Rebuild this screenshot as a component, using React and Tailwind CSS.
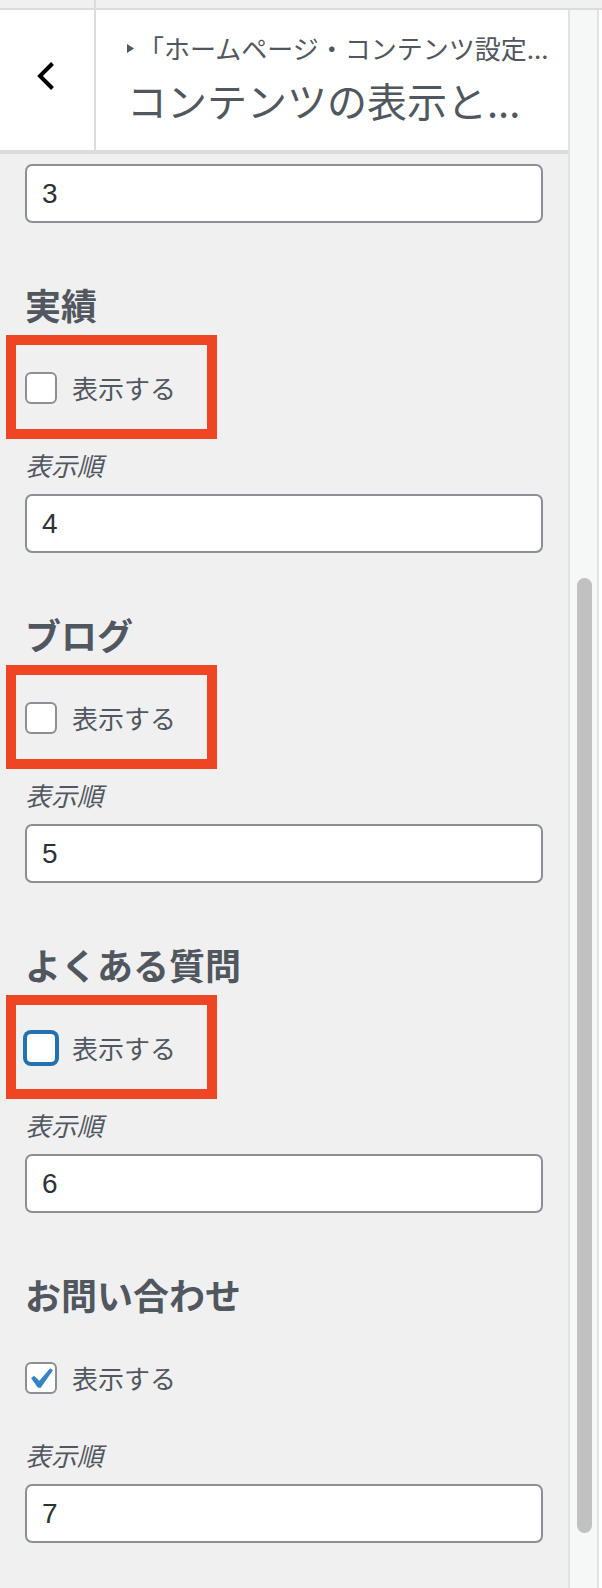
import React from "react";

const sections = [
  { title: "実績", value: "4", state: "boxed" },
  { title: "ブログ", value: "5", state: "boxed" },
  { title: "よくある質問", value: "6", state: "focused" },
  { title: "お問い合わせ", value: "7", state: "checked" },
];

function NumberInput({ value }) {
  return (
    <div className="h-[59px] w-[518px] rounded-[7px] border-2 border-[#8c8f94] bg-white px-[15px] flex items-center font-['Liberation_Sans',sans-serif] text-[28px] text-[#2c3338]">
      {value}
    </div>
  );
}

function Checkbox({ state }) {
  if (state === "focused") {
    return (
      <div className="h-[32px] w-[32px] shrink-0 rounded-[6px] border-2 border-[#2271b1] bg-white shadow-[0_0_0_2px_#2271b1]" />
    );
  }
  return (
    <div className="relative h-[32px] w-[32px] shrink-0 rounded-[6px] border-2 border-[#8c8f94] bg-white">
      {state === "checked" && (
        <svg
          className="absolute left-[-8px] top-[-6px]"
          width="42"
          height="42"
          viewBox="0 0 20 20"
        >
          <path
            d="M14.83 4.89l1.34.94-5.81 8.38H9.02L5.78 9.67l1.34-1.25 2.57 2.4z"
            fill="#3582c4"
          />
        </svg>
      )}
    </div>
  );
}

function Section({ title, value, state }) {
  return (
    <div className="flex flex-col">
      <div className="mt-[61px] h-[40px] leading-[40px] text-[36px] font-bold text-[#50575e]">
        {title}
      </div>
      <div className="relative mt-[48px] flex h-[32px] items-center gap-[15px]">
        <Checkbox state={state} />
        <span className="text-[26px] leading-[32px] text-[#50575e]">表示する</span>
        {state !== "checked" && (
          <div className="absolute left-[-19px] top-[-37px] h-[104px] w-[211px] border-[10px] border-[#ee4622]" />
        )}
      </div>
      <div className="mt-[46px] h-[30px] text-[26px] italic leading-[30px] text-[#50575e]">
        表示順
      </div>
      <div className="mt-[14px]">
        <NumberInput value={value} />
      </div>
    </div>
  );
}

export default function App() {
  return (
    <div className="h-[1588px] w-[602px] overflow-hidden bg-[#f0f0f1] font-['Noto_Sans_CJK_JP',sans-serif]">
      <div className="flex h-[10px] border-b-2 border-[#dcdcde] bg-[#f0f0f1]">
        <div className="h-full w-[96px] border-r-2 border-[#dcdcde]" />
      </div>
      <div className="flex h-[1578px]">
        <div className="flex w-[568px] flex-col">
          <div className="flex h-[144px] border-b-4 border-[#dcdcde] bg-white">
            <div className="flex w-[96px] shrink-0 justify-center border-r-2 border-[#dcdcde] pt-[52px] pr-[2px]">
              <svg width="20" height="28" viewBox="0 0 20 28">
                <polyline
                  points="16.5,1.5 4,14 16.5,26.5"
                  fill="none"
                  stroke="#000"
                  strokeWidth="4"
                />
              </svg>
            </div>
            <div className="flex min-w-0 flex-col pl-[31px] pt-[23px] text-[#50575e]">
              <div className="flex h-[30px] items-center gap-[4px]">
                <svg width="7" height="9" viewBox="0 0 7 9" className="mt-[1px]">
                  <polygon points="0,0 7,4.5 0,9" fill="#50575e" />
                </svg>
                <span className="whitespace-nowrap text-[26px] leading-[30px]">
                  「ホームページ・コンテンツ設定...
                </span>
              </div>
              <div className="mt-[13px] whitespace-nowrap text-[40px] leading-[48px]">
                コンテンツの表示と...
              </div>
            </div>
          </div>
          <div className="flex flex-col px-[25px] pt-[10px]">
            <NumberInput value="3" />
            {sections.map((s) => (
              <Section key={s.title} {...s} />
            ))}
          </div>
        </div>
        <div className="flex w-[34px] bg-white">
          <div className="h-full w-[31px] border-x-2 border-[#e2e2e2] bg-[#f6f7f7] pl-[7px]">
            <div className="mt-[568px] h-[955px] w-[15px] rounded-full bg-[#c1c1c1]" />
          </div>
        </div>
      </div>
    </div>
  );
}
